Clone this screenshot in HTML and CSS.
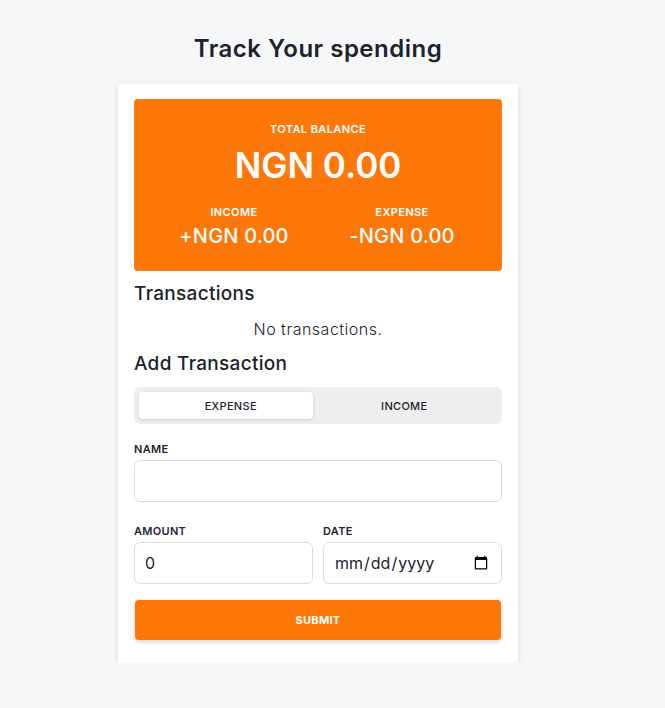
FILE: index.html
```html
<!DOCTYPE html>
<html lang="en">
<head>
<meta charset="utf-8">
<title>Track Your spending</title>
<link rel="stylesheet" href="styles.css">
</head>
<body>
<main class="app">
  <h1 class="title">Track Your spending</h1>
  <section class="card">
    <div class="balance">
      <div class="label">TOTAL BALANCE</div>
      <div class="total">NGN 0.00</div>
      <div class="split">
        <div class="col">
          <div class="label">INCOME</div>
          <div class="amount">+NGN 0.00</div>
        </div>
        <div class="col">
          <div class="label">EXPENSE</div>
          <div class="amount">-NGN 0.00</div>
        </div>
      </div>
    </div>
    <h2 class="heading">Transactions</h2>
    <p class="empty">No transactions.</p>
    <h2 class="heading add">Add Transaction</h2>
    <div class="toggle">
      <button class="tab active" type="button">EXPENSE</button>
      <button class="tab" type="button">INCOME</button>
    </div>
    <form class="form">
      <label class="field">
        <span class="flabel">NAME</span>
        <input class="input" type="text">
      </label>
      <div class="row">
        <label class="field">
          <span class="flabel">AMOUNT</span>
          <input class="input" type="number" value="0">
        </label>
        <label class="field">
          <span class="flabel">DATE</span>
          <input class="input" type="date">
        </label>
      </div>
      <button class="submit" type="button">SUBMIT</button>
    </form>
  </section>
</main>
</body>
</html>
```
FILE: styles.css
```css
* { box-sizing: border-box; }
html, body { margin: 0; padding: 0; }
body {
  background: #f6f7f9;
  font-family: Inter, "Open Sans", sans-serif;
  color: #1f2430;
}
.app {
  width: 400px;
  margin: 0 0 0 118px;
  padding-top: 33px;
}
.title {
  margin: 0 0 19px;
  text-align: center;
  font-size: 24px;
  font-weight: 600;
  line-height: 32px;
  letter-spacing: 0.5px;
  color: #1d222c;
}
.card {
  background: #fff;
  padding: 15px 16px 22px;
  box-shadow: 0 2px 6px rgba(0,0,0,0.12);
}
.balance {
  background: #fd7709;
  border-radius: 4px;
  color: #fff;
  text-align: center;
  padding: 22px 16px 21px;
}
.label {
  font-size: 11px;
  font-weight: 600;
  line-height: 16px;
  letter-spacing: 0.4px;
}
.total {
  font-size: 35px;
  font-weight: 600;
  line-height: 48px;
  margin: 4px 0 15px;
}
.split { display: flex; }
.col { flex: 1; }
.amount {
  font-size: 20px;
  font-weight: 500;
  line-height: 28px;
  margin-top: 2px;
  letter-spacing: 0.2px;
}
.heading {
  margin: 11px 0 0;
  font-size: 19px;
  font-weight: 500;
  line-height: 24px;
  letter-spacing: 0.3px;
  color: #1d222c;
}
.heading.add { margin-top: 13px; }
.empty {
  margin: 13px 0 0;
  text-align: center;
  font-size: 16px;
  font-weight: 300;
  line-height: 20px;
  letter-spacing: 0.5px;
}
.toggle {
  display: flex;
  gap: 10px;
  margin-top: 11px;
  background: #eeeeee;
  border-radius: 6px;
  padding: 5px;
}
.tab {
  flex: 1;
  border: 0;
  background: transparent;
  font-family: inherit;
  font-size: 11px;
  font-weight: 500;
  letter-spacing: 0.3px;
  color: #1d222c;
  height: 27px;
  padding: 0;
  border-radius: 4px;
  cursor: pointer;
}
.tab:first-child { padding-left: 10px; }
.tab:last-child { padding-right: 11px; }
.tab.active {
  background: #fff;
  box-shadow: 0 1px 3px rgba(0,0,0,0.15);
}
.form {
  display: flex;
  flex-direction: column;
  margin-top: 18px;
}
.field {
  display: flex;
  flex-direction: column;
  flex: 1;
  min-width: 0;
}
.flabel {
  font-size: 11px;
  font-weight: 600;
  line-height: 14px;
  letter-spacing: 0.3px;
  margin-bottom: 4px;
}
.input {
  width: 100%;
  min-width: 0;
  height: 42px;
  border: 1px solid #dcdcdc;
  border-radius: 6px;
  padding: 0 10px;
  font-family: inherit;
  font-size: 16px;
  color: #1d222c;
  background: #fff;
}
.row {
  display: flex;
  gap: 10px;
  margin-top: 22px;
}
.submit {
  margin: 16px 1px 0;
  height: 40px;
  border: 0;
  border-radius: 4px;
  background: #fd7709;
  color: #fff;
  font-family: inherit;
  font-size: 11px;
  font-weight: 700;
  letter-spacing: 0.3px;
  box-shadow: 0 2px 5px rgba(0,0,0,0.18);
  cursor: pointer;
}
```
